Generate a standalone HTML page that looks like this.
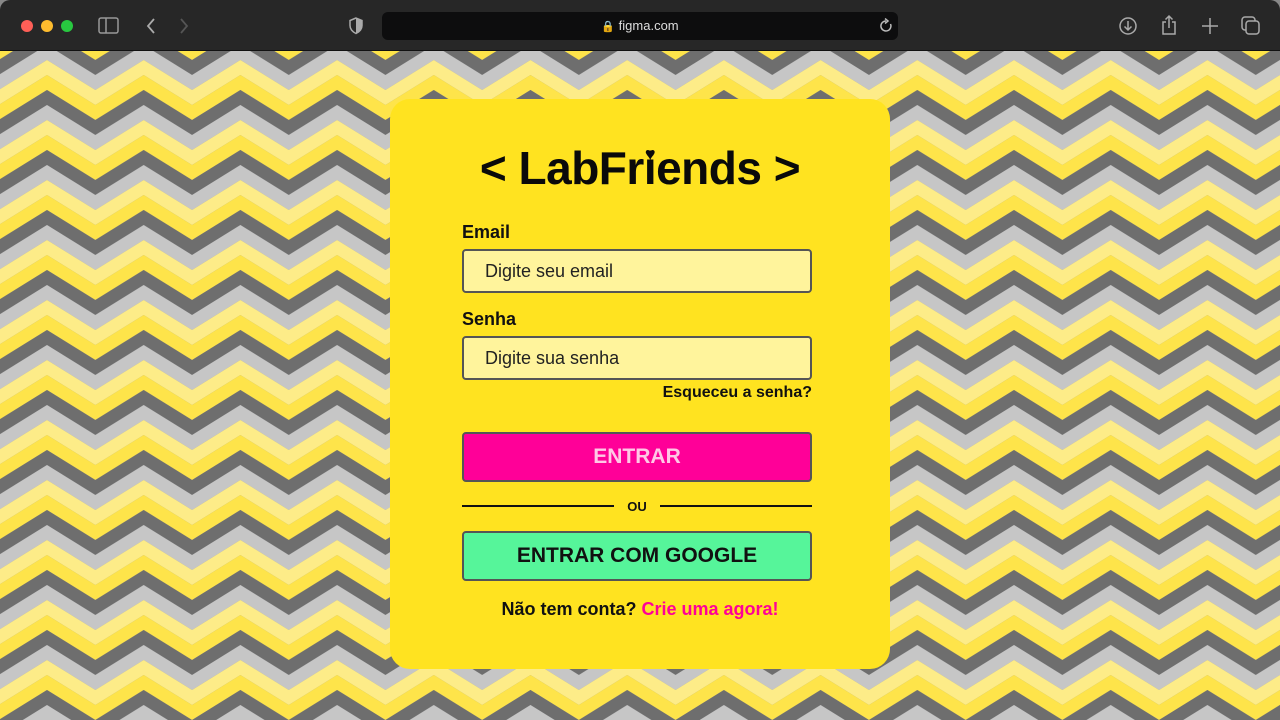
<!DOCTYPE html>
<html><head><meta charset="utf-8"><style>
*{margin:0;padding:0;box-sizing:border-box}
body{width:1280px;height:720px;overflow:hidden;background:#888;font-family:"Liberation Sans",sans-serif;position:relative}
.bar{position:absolute;left:0;top:0;width:1280px;height:51px;background:#272727;border-radius:10px 10px 0 0;border-bottom:1px solid #111}
.dot{position:absolute;top:20px;width:12px;height:12px;border-radius:50%}
.addr{position:absolute;left:382px;top:12px;width:516px;height:28px;background:#0d0d0e;border-radius:6px;color:#ddd;font-size:13px;text-align:center;line-height:28px}
.bg{position:absolute;left:0;top:51px}
.card{position:absolute;left:390px;top:99px;width:500px;height:570px;background:#ffe320;border-radius:20px}
.logo{position:absolute;left:0;width:500px;top:42px;text-align:center;font-size:46px;font-weight:bold;letter-spacing:-0.5px;color:#0a0a0a}
.lbl{position:absolute;left:72px;font-size:18px;font-weight:bold;color:#111}
.inp{position:absolute;left:72px;width:350px;height:44px;background:#fff49c;border:2px solid #555;border-radius:4px;font-size:18px;color:#222;padding-left:21px;line-height:40px}
.btn{position:absolute;left:72px;width:350px;height:50px;border:2px solid #555;border-radius:4px;text-align:center;line-height:46px;font-size:21px;font-weight:bold}
</style></head><body>
<div class="bar">
<div class="dot" style="left:21px;background:#fe5f57"></div>
<div class="dot" style="left:41px;background:#febc2e"></div>
<div class="dot" style="left:61px;background:#28c840"></div>
<svg style="position:absolute;left:98px;top:17px" width="22" height="18"><rect x="1" y="1" width="19" height="15" rx="2" fill="none" stroke="#999" stroke-width="1.5"/><line x1="8" y1="1" x2="8" y2="16" stroke="#999" stroke-width="1.5"/></svg>
<svg style="position:absolute;left:145px;top:17px" width="12" height="18"><path d="M9 2L3 9l6 7" fill="none" stroke="#aaa" stroke-width="1.8"/></svg>
<svg style="position:absolute;left:178px;top:17px" width="12" height="18"><path d="M3 2l6 7-6 7" fill="none" stroke="#555" stroke-width="1.8"/></svg>
<svg style="position:absolute;left:348px;top:17px" width="16" height="18"><path d="M8 1L2 3.5v5c0 4 3 6.5 6 8 3-1.5 6-4 6-8v-5z" fill="none" stroke="#aaa" stroke-width="1.5"/><path d="M8 1v15.5c3-1.5 6-4 6-8v-5z" fill="#aaa"/></svg>
<div class="addr"><span style="font-size:11px">🔒</span> figma.com</div>
<svg style="position:absolute;left:878px;top:18px" width="16" height="16"><path d="M12.5 6A5 5 0 1 1 8 3" fill="none" stroke="#bbb" stroke-width="1.5"/><path d="M7 0.5l3 2.5-3 2.5" fill="none" stroke="#bbb" stroke-width="1.5"/></svg>
<svg style="position:absolute;left:1118px;top:16px" width="20" height="20"><circle cx="10" cy="10" r="8" fill="none" stroke="#aaa" stroke-width="1.5"/><path d="M10 5v9M6.5 10.5L10 14l3.5-3.5" fill="none" stroke="#aaa" stroke-width="1.5"/></svg>
<svg style="position:absolute;left:1160px;top:14px" width="18" height="22"><path d="M6 8H3v12h12V8h-3M9 14V2M5.5 5.5L9 2l3.5 3.5" fill="none" stroke="#aaa" stroke-width="1.5"/></svg>
<svg style="position:absolute;left:1201px;top:17px" width="18" height="18"><path d="M9 1v16M1 9h16" stroke="#aaa" stroke-width="1.5"/></svg>
<svg style="position:absolute;left:1241px;top:16px" width="20" height="20"><rect x="1" y="1" width="13" height="13" rx="3" fill="none" stroke="#aaa" stroke-width="1.5"/><rect x="5" y="5" width="13" height="13" rx="3" fill="#272727" stroke="#aaa" stroke-width="1.5"/></svg>
</div>
<svg class="bg" width="1280" height="669">
<defs><pattern id="z" patternUnits="userSpaceOnUse" width="96.7" height="60" patternTransform="translate(-49.7,39)">
<g>
<polygon points="0,-60 48.35,-30 96.7,-60 96.7,-45 48.35,-15 0,-45" fill="#6e6e6e"/>
<polygon points="0,-45 48.35,-15 96.7,-45 96.7,-30 48.35,0 0,-30" fill="#c6c6c6"/>
<polygon points="0,-30 48.35,0 96.7,-30 96.7,-15 48.35,15 0,-15" fill="#fdec88"/>
<polygon points="0,-15 48.35,15 96.7,-15 96.7,0 48.35,30 0,0" fill="#fee44a"/>
<polygon points="0,0 48.35,30 96.7,0 96.7,15 48.35,45 0,15" fill="#6e6e6e"/>
<polygon points="0,15 48.35,45 96.7,15 96.7,30 48.35,60 0,30" fill="#c6c6c6"/>
<polygon points="0,30 48.35,60 96.7,30 96.7,45 48.35,75 0,45" fill="#fdec88"/>
<polygon points="0,45 48.35,75 96.7,45 96.7,60 48.35,90 0,60" fill="#fee44a"/>
</g></pattern></defs>
<rect width="1280" height="669" fill="url(#z)"/>
</svg>
<div class="card">
<div class="logo">&lt; LabFr<span style="position:relative">i<span style="position:absolute;left:50%;top:2px;transform:translateX(-50%);font-size:18px">♥</span></span>ends &gt;</div>
<div class="lbl" style="top:123px">Email</div>
<div class="inp" style="top:150px">Digite seu email</div>
<div class="lbl" style="top:210px">Senha</div>
<div class="inp" style="top:237px">Digite sua senha</div>
<div style="position:absolute;right:78px;top:285px;font-size:16px;font-weight:bold;color:#111">Esqueceu a senha?</div>
<div class="btn" style="top:333px;background:#ff0098;color:#ffc8e6">ENTRAR</div>
<div style="position:absolute;left:72px;top:406px;width:152px;height:2px;background:#111"></div>
<div style="position:absolute;left:270px;top:406px;width:152px;height:2px;background:#111"></div>
<div style="position:absolute;left:224px;width:46px;top:400px;text-align:center;font-size:13px;font-weight:bold;color:#111">OU</div>
<div class="btn" style="top:432px;background:#56f59a;color:#111">ENTRAR COM GOOGLE</div>
<div style="position:absolute;left:0;width:500px;top:500px;text-align:center;font-size:18px;font-weight:bold;color:#111">Não tem conta? <span style="color:#ff0098">Crie uma agora!</span></div>
</div>
</body></html>
